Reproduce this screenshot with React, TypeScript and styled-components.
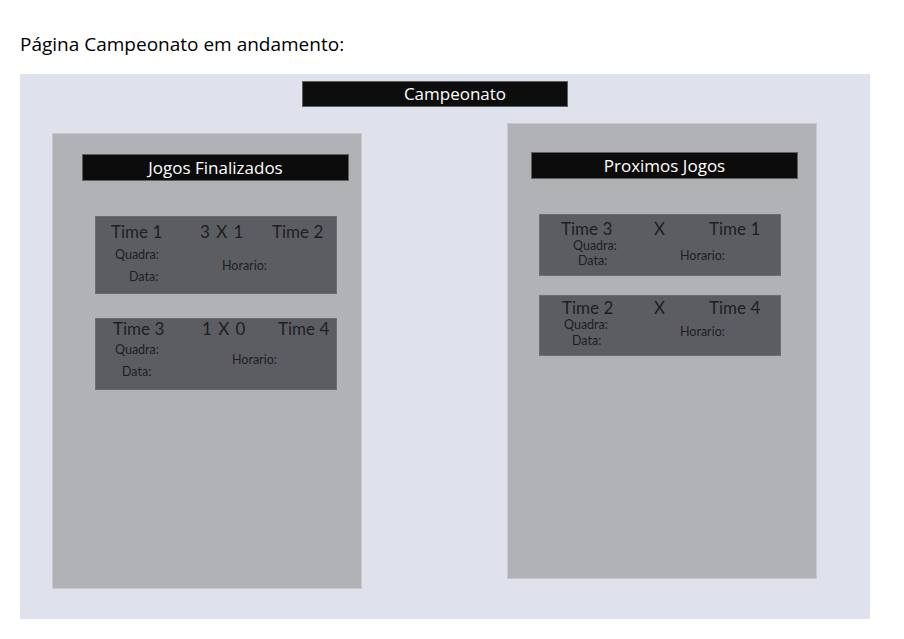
import styled, { createGlobalStyle } from "styled-components";

type Match = {
  id: number;
  home: string;
  score: string;
  away: string;
  height: number;
  padTop: number;
  cols: [number, number, number];
  detailsTop: number;
  quadraX: number;
  dataX: number;
  dataGap: number;
  horarioX: number;
  horarioY: number;
};

const finished: Match[] = [
  {
    id: 1,
    home: "Time 1",
    score: "3 X 1",
    away: "Time 2",
    height: 78,
    padTop: 5,
    cols: [15, 104, 176],
    detailsTop: 7,
    quadraX: 19,
    dataX: 33,
    dataGap: 10,
    horarioX: 126,
    horarioY: 11,
  },
  {
    id: 2,
    home: "Time 3",
    score: "1 X 0",
    away: "Time 4",
    height: 72,
    padTop: 0,
    cols: [17, 106, 182],
    detailsTop: 5,
    quadraX: 19,
    dataX: 26,
    dataGap: 10,
    horarioX: 136,
    horarioY: 10,
  },
];

const upcoming: Match[] = [
  {
    id: 3,
    home: "Time 3",
    score: "X",
    away: "Time 1",
    height: 62,
    padTop: 4,
    cols: [21, 114, 169],
    detailsTop: 1,
    quadraX: 33,
    dataX: 38,
    dataGap: 3,
    horarioX: 140,
    horarioY: 10,
  },
  {
    id: 4,
    home: "Time 2",
    score: "X",
    away: "Time 4",
    height: 61,
    padTop: 2,
    cols: [22, 114, 169],
    detailsTop: 1,
    quadraX: 24,
    dataX: 32,
    dataGap: 4,
    horarioX: 140,
    horarioY: 7,
  },
];

const MatchCard = ({ match }: { match: Match }) => {
  const [a, b, c] = match.cols;
  return (
    <Card $height={match.height} $padTop={match.padTop}>
      <TeamsRow $left={a} $first={b - a} $second={c - b}>
        <Team>{match.home}</Team>
        <Score $spread={match.score.length > 1}>{match.score}</Score>
        <Team>{match.away}</Team>
      </TeamsRow>
      <Details $top={match.detailsTop}>
        <Labels>
          <Label $indent={match.quadraX}>Quadra:</Label>
          <Label $indent={match.dataX} $gap={match.dataGap}>
            Data:
          </Label>
        </Labels>
        <Label $indent={match.horarioX} $gap={match.horarioY}>
          Horario:
        </Label>
      </Details>
    </Card>
  );
};

const App = () => {
  return (
    <Page>
      <GlobalStyle />
      <PageTitle>Página Campeonato em andamento:</PageTitle>
      <Board>
        <BoardHeader>Campeonato</BoardHeader>
        <Columns>
          <Column $top={26} $padTop={20} $padLeft={29}>
            <ColumnHeading>Jogos Finalizados</ColumnHeading>
            <CardList $indent={13} $gap={24}>
              {finished.map((m) => (
                <MatchCard key={m.id} match={m} />
              ))}
            </CardList>
          </Column>
          <Column $top={16} $padTop={28} $padLeft={23}>
            <ColumnHeading>Proximos Jogos</ColumnHeading>
            <CardList $indent={8} $gap={19}>
              {upcoming.map((m) => (
                <MatchCard key={m.id} match={m} />
              ))}
            </CardList>
          </Column>
        </Columns>
      </Board>
    </Page>
  );
};

const GlobalStyle = createGlobalStyle`
  * {
    box-sizing: border-box;
  }
  body {
    margin: 0;
    background: #ffffff;
    font-family: "Open Sans", "Liberation Sans", sans-serif;
  }
`;

const Label = styled.span<{ $indent: number; $gap?: number }>`
  display: block;
  margin-left: ${(p) => p.$indent}px;
  margin-top: ${(p) => p.$gap ?? 0}px;
  font-family: Lato, "Open Sans", sans-serif;
  font-size: 12.5px;
  line-height: 12px;
  color: #1d1d22;
  white-space: nowrap;
`;
const Labels = styled.div`
  display: flex;
  flex-direction: column;
  width: 0;
`;
const Details = styled.div<{ $top: number }>`
  display: flex;
  align-items: flex-start;
  margin-top: ${(p) => p.$top}px;
`;
const Score = styled.span<{ $spread: boolean }>`
  word-spacing: ${(p) => (p.$spread ? 2 : 0)}px;
  white-space: nowrap;
`;
const Team = styled.span`
  white-space: nowrap;
`;
const TeamsRow = styled.div<{ $left: number; $first: number; $second: number }>`
  display: grid;
  grid-template-columns: ${(p) => p.$first}px ${(p) => p.$second}px auto;
  padding-left: ${(p) => p.$left}px;
  font-family: Lato, "Open Sans", sans-serif;
  font-size: 17px;
  line-height: 20px;
  color: #1d1d22;
`;
const Card = styled.div<{ $height: number; $padTop: number }>`
  width: 242px;
  height: ${(p) => p.$height}px;
  padding-top: ${(p) => p.$padTop}px;
  background-color: #5c5d62;
  border: 1px solid #6b6c71;
`;
const CardList = styled.div<{ $indent: number; $gap: number }>`
  display: flex;
  flex-direction: column;
  gap: ${(p) => p.$gap}px;
  margin-top: 35px;
  margin-left: ${(p) => p.$indent}px;
`;
const ColumnHeading = styled.h2`
  width: 267px;
  height: 27px;
  margin: 0;
  background-color: #0c0c0c;
  border: 1px solid #5e5e5e;
  color: #ffffff;
  font-size: 17px;
  font-weight: 400;
  line-height: 25px;
  text-align: center;
`;
const Column = styled.section<{ $top: number; $padTop: number; $padLeft: number }>`
  width: 310px;
  height: 456px;
  margin-top: ${(p) => p.$top}px;
  padding: ${(p) => p.$padTop}px 0 0 ${(p) => p.$padLeft}px;
  background-color: #b1b2b5;
  border: 1px solid #c8c9ce;
`;
const Columns = styled.div`
  display: flex;
  align-items: flex-start;
  gap: 145px;
  padding-left: 32px;
`;
const BoardHeader = styled.h1`
  width: 266px;
  height: 26px;
  margin: 0 0 0 282px;
  padding-left: 40px;
  background-color: #0d0d0d;
  border: 1px solid #5e5e5e;
  color: #ffffff;
  font-size: 17px;
  font-weight: 400;
  line-height: 24px;
  text-align: center;
`;
const Board = styled.main`
  width: 850px;
  height: 545px;
  padding-top: 7px;
  background-color: #dfe1ec;
`;
const PageTitle = styled.p`
  height: 26px;
  margin: 0 0 17px;
  font-size: 19px;
  line-height: 26px;
  color: #000000;
`;
const Page = styled.div`
  padding: 31px 0 0 20px;
`;

export default App;
